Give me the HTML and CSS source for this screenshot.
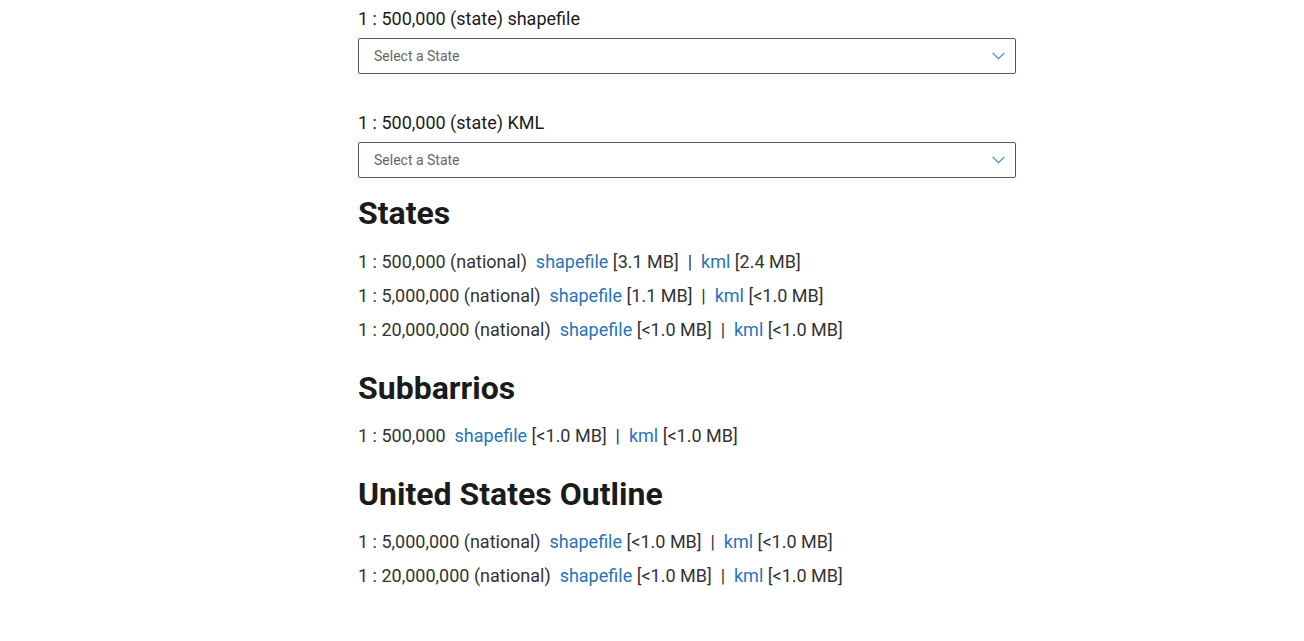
FILE: index.html
```html
<!DOCTYPE html>
<html>
<head>
<meta charset="utf-8">
<link rel="stylesheet" href="styles.css">
</head>
<body>
<main class="page">
  <div class="fields">
    <div class="field">
      <label class="field-label">1 : 500,000 (state) shapefile</label>
      <div class="select">
        <span class="select-text">Select a State</span>
        <svg class="chev" width="13" height="8" viewBox="0 0 13 8"><path d="M0.7 0.9 L6.5 6.7 L12.3 0.9" fill="none" stroke="#3b87cc" stroke-width="1.2"/></svg>
      </div>
    </div>
    <div class="field">
      <label class="field-label">1 : 500,000 (state) KML</label>
      <div class="select">
        <span class="select-text">Select a State</span>
        <svg class="chev" width="13" height="8" viewBox="0 0 13 8"><path d="M0.7 0.9 L6.5 6.7 L12.3 0.9" fill="none" stroke="#3b87cc" stroke-width="1.2"/></svg>
      </div>
    </div>
  </div>

  <h2 class="heading first">States</h2>
  <p class="row">1 : 500,000 (national)&nbsp; <a href="#">shapefile</a> [3.1 MB] &nbsp;|&nbsp; <a href="#">kml</a> [2.4 MB]</p>
  <p class="row">1 : 5,000,000 (national)&nbsp; <a href="#">shapefile</a> [1.1 MB] &nbsp;|&nbsp; <a href="#">kml</a> [&lt;1.0 MB]</p>
  <p class="row">1 : 20,000,000 (national)&nbsp; <a href="#">shapefile</a> [&lt;1.0 MB] &nbsp;|&nbsp; <a href="#">kml</a> [&lt;1.0 MB]</p>

  <h2 class="heading">Subbarrios</h2>
  <p class="row">1 : 500,000&nbsp; <a href="#">shapefile</a> [&lt;1.0 MB] &nbsp;|&nbsp; <a href="#">kml</a> [&lt;1.0 MB]</p>

  <h2 class="heading">United States Outline</h2>
  <p class="row">1 : 5,000,000 (national)&nbsp; <a href="#">shapefile</a> [&lt;1.0 MB] &nbsp;|&nbsp; <a href="#">kml</a> [&lt;1.0 MB]</p>
  <p class="row">1 : 20,000,000 (national)&nbsp; <a href="#">shapefile</a> [&lt;1.0 MB] &nbsp;|&nbsp; <a href="#">kml</a> [&lt;1.0 MB]</p>
</main>
</body>
</html>
```

FILE: styles.css
```css
html, body {
  margin: 0;
  padding: 0;
  background: #fff;
}
body {
  font-family: Roboto, "Liberation Sans", sans-serif;
  color: #333;
}
.page {
  width: 658px;
  margin: 0 0 0 358px;
  padding-top: 6px;
}
.fields {
  display: flex;
  flex-direction: column;
  gap: 36px;
}
.field {
  display: flex;
  flex-direction: column;
  gap: 6px;
}
.field-label {
  font-size: 18px;
  line-height: 26px;
  color: #1b1b1b;
}
.select {
  box-sizing: border-box;
  height: 36px;
  border: 1px solid #4b5b66;
  border-radius: 2px;
  display: flex;
  align-items: center;
  justify-content: space-between;
  padding: 0 10px 0 15px;
}
.select-text {
  font-size: 14px;
  color: #666;
}
.chev {
  display: block;
}
.heading {
  font-size: 32px;
  font-weight: 700;
  color: #1b1b1b;
  margin: 28px 0 18px;
  line-height: 36px;
}
.heading.first {
  margin: 17px 0 19px;
}
.row {
  font-size: 18px;
  line-height: 24px;
  margin: 0 0 10px;
  color: #333;
}
a {
  color: #2874b8;
  text-decoration: none;
}
```
